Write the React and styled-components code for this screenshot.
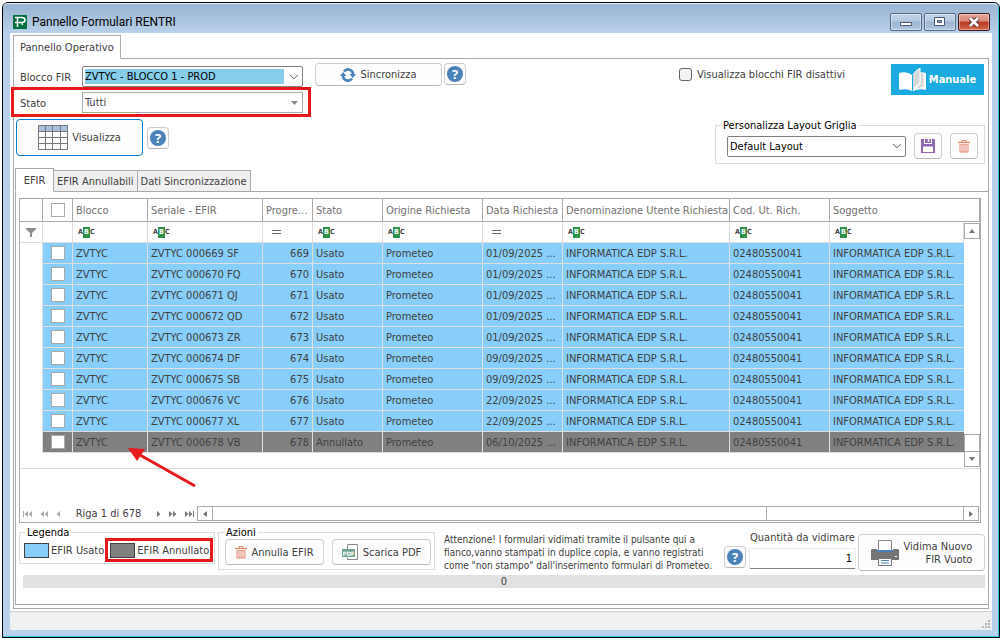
import { styled, createGlobalStyle, css } from "styled-components";

const columns = [
  { label: "", width: 23 },
  { label: "check", width: 30 },
  { label: "Blocco", width: 75, filter: "abc" },
  { label: "Seriale - EFIR", width: 115, filter: "abc" },
  { label: "Progre...", width: 50, filter: "eq" },
  { label: "Stato", width: 70, filter: "abc" },
  { label: "Origine Richiesta", width: 100, filter: "abc" },
  { label: "Data Richiesta", width: 80, filter: "eq" },
  { label: "Denominazione Utente Richiesta", width: 167, filter: "abc" },
  { label: "Cod. Ut. Rich.", width: 100, filter: "abc" },
  { label: "Soggetto", filter: "abc" },
];

const rows = [
  ["669 SF", "01/09/2025"],
  ["670 FQ", "01/09/2025"],
  ["671 QJ", "01/09/2025"],
  ["672 QD", "01/09/2025"],
  ["673 ZR", "01/09/2025"],
  ["674 DF", "09/09/2025"],
  ["675 SB", "09/09/2025"],
  ["676 VC", "22/09/2025"],
  ["677 XL", "22/09/2025"],
  ["678 VB", "06/10/2025", true],
];

function TrashIcon() {
  return (
    <svg width="12" height="13" viewBox="0 0 12 13">
      <path d="M4 2V.5h4V2" fill="none" stroke="#e58a72" />
      <path d="M0 2.5h12" stroke="#e58a72" strokeWidth="1.4" />
      <path d="M1 4.5h10V11l-1 2H2l-1-2z" fill="#f2c3b8" />
      <path d="M1.5 4.5h9" stroke="#e9a797" />
      <path d="M1.5 11.5h9" stroke="#e9a797" />
    </svg>
  );
}

function Help() {
  return (
    <HelpButton type="button" aria-label="Aiuto">
      <span>?</span>
    </HelpButton>
  );
}

function Arrow({ dir = "up", size = 6 }) {
  const turn = { up: 0, right: 90, down: 180, left: 270 }[dir];
  return (
    <svg width={size} height={size} viewBox="0 0 6 6">
      <path d="M0 5L3 1l3 4z" fill="#777" transform={`rotate(${turn} 3 3)`} />
    </svg>
  );
}

function Chevron() {
  return (
    <svg width="10" height="6" viewBox="0 0 10 6">
      <path d="M1 .8l4 4 4-4" fill="none" stroke="#555" />
    </svg>
  );
}

function NavIcon({ count = 1, bar, back, dim }) {
  const width = count * 4 + (bar ? 1 : 0);
  return (
    <svg width={width} height="6" viewBox={`0 0 ${width} 6`}>
      <g
        fill={dim ? "#a9a9a9" : "#777"}
        transform={back ? `translate(${width} 0) scale(-1 1)` : undefined}
      >
        {[...Array(count)].map((_, i) => (
          <path key={i} d={`M${i * 4} 0l3.5 3-3.5 3z`} />
        ))}
        {bar && <path d={`M${width - 1} 0h1v6h-1z`} />}
      </g>
    </svg>
  );
}

function TitleBar() {
  return (
    <StyledTitleBar>
      <svg width="14" height="14" viewBox="0 0 14 14">
        <path d="M0 0h14v14H0z" fill="#04703f" />
        <path
          d="M2 2.5h6.500q3.500 0 3.500 2.500t-3.500 2.500H2M4.500 3v9M9 7.500l.5 2.500"
          fill="none"
          stroke="#fff"
          strokeWidth="1.5"
        />
      </svg>
      <h1>Pannello Formulari RENTRI</h1>
      <div className="controls">
        <WindowButton type="button" aria-label="Riduci">
          <svg width="12" height="10" viewBox="0 0 12 10">
            <path d="M.5 5.500h11v3H.5z" fill="#fff" stroke="#4d5666" />
          </svg>
        </WindowButton>
        <WindowButton type="button" aria-label="Ingrandisci">
          <svg width="12" height="10" viewBox="0 0 12 10">
            <path d="M.5.5h10v8H.5z" fill="#fff" stroke="#4d5666" />
            <path d="M3.500 3.500h4v2h-4z" fill="#a5bedb" stroke="#4d5666" />
          </svg>
        </WindowButton>
        <WindowButton type="button" aria-label="Chiudi" $close>
          <svg width="12" height="10" viewBox="0 0 12 10">
            <path d="M2 1l8 8M10 1L2 9" stroke="#5a2a30" strokeWidth="4.500" />
            <path d="M2 1l8 8M10 1L2 9" stroke="#fff" strokeWidth="2.600" />
          </svg>
        </WindowButton>
      </div>
    </StyledTitleBar>
  );
}

function Toolbar() {
  return (
    <StyledToolbar>
      <div className="filters">
        <Field>
          <label htmlFor="blocco">Blocco FIR</label>
          <Select $selected>
            <select id="blocco">
              <option>ZVTYC - BLOCCO 1 - PROD</option>
            </select>
            <Chevron />
          </Select>
        </Field>
        <Field $marked>
          <label htmlFor="stato">Stato</label>
          <Select $square>
            <select id="stato">
              <option>Tutti</option>
            </select>
            <svg width="10" height="6" viewBox="0 0 10 6">
              <path d="M2 1h7L5.500 5z" fill="#888" />
            </svg>
          </Select>
        </Field>
        <div className="show">
          <Button type="button" $primary>
            <svg width="30" height="26" viewBox="0 0 30 26">
              <path d="M.5.5h29v6H.5z" fill="#a9c1e0" />
              <path
                d="M.5.5h29v24H.5zM.5 6.500h29M.5 12.500h29M.5 18.500h29M7.500.5v24M14.500.5v24M22.500.5v24"
                fill="none"
                stroke="#777"
              />
            </svg>
            Visualizza
          </Button>
          <Help />
        </div>
      </div>
      <div className="sync">
        <Button type="button" $wide>
          <svg width="16" height="14" viewBox="0 0 16 14">
            <g fill="none" stroke="#4a82b9" strokeWidth="2.600">
              <path d="M4 3.500A5 5 0 0 1 13 7" />
              <path d="M12 10.500A5 5 0 0 1 3 7" />
            </g>
            <path d="M9.500 6H16l-3.200 4zM0 8h6.500L3.200 4z" fill="#4a82b9" />
          </svg>
          Sincronizza
        </Button>
        <Help />
      </div>
      <div className="options">
        <div className="top">
          <Check>
            <input type="checkbox" />
            Visualizza blocchi FIR disattivi
          </Check>
          <ManualButton type="button">
            <svg width="27" height="24" viewBox="0 0 27 24">
              <path d="M0 5q8-2 13 2v16q-5-3-13-1z" fill="#fff" />
              <path d="M14 7q6-4 13-2v17q-7-2-13 1z" fill="#fff" />
              <path d="M14 7q3-5 7-7v15q-5 3-7 8z" fill="#d5d8da" />
              <path d="M21.500 5h3v14q-5 0-8 2 2-3 5-5z" fill="#d5d8da" />
              <path
                d="M14 7q3-5 7-7v15q-5 3-7 8"
                fill="none"
                stroke="#fff"
              />
            </svg>
            Manuale
          </ManualButton>
        </div>
        <Group className="layout">
          <legend>Personalizza Layout Griglia</legend>
          <Select>
            <select aria-label="Layout griglia">
              <option>Default Layout</option>
            </select>
            <Chevron />
          </Select>
          <Button type="button" aria-label="Salva layout" $icon>
            <svg width="14" height="14" viewBox="0 0 14 14">
              <path d="M0 0h14v14H0z" fill="#8f68b0" />
              <path d="M3 0h8v5H3z" fill="#fff" />
              <path d="M4 0h6v4H4z" fill="#8f68b0" />
              <path d="M7.500 0v3" stroke="#fff" strokeWidth="1.5" />
              <path d="M2 7.500h10V13H2z" fill="#fff" />
            </svg>
          </Button>
          <Button type="button" aria-label="Elimina layout" $icon>
            <TrashIcon />
          </Button>
        </Group>
      </div>
    </StyledToolbar>
  );
}

function FilterMark({ type }) {
  if (type === "eq") return <Equals />;
  if (type === "abc")
    return (
      <Abc>
        A<b>B</b>C
      </Abc>
    );
  return null;
}

function Grid() {
  return (
    <StyledGrid>
      <Table>
        <colgroup>
          {columns.map((c) => (
            <col key={c.label} style={{ width: c.width }} />
          ))}
          <col style={{ width: 16 }} />
        </colgroup>
        <thead>
          <tr>
            {columns.map((c) => (
              <th key={c.label} colSpan={c.label === "Soggetto" ? 2 : 1}>
                {c.label === "check" ? (
                  <input type="checkbox" aria-label="Seleziona tutti" />
                ) : (
                  c.label
                )}
              </th>
            ))}
          </tr>
        </thead>
        <tbody>
          <FilterRow>
            {columns.map((c, i) => (
              <td key={c.label}>
                {i === 0 ? (
                  <svg width="10" height="9" viewBox="0 0 10 9">
                    <path d="M0 0h10v1L6 5v4H4V5L0 1z" fill="#8a8a8a" />
                  </svg>
                ) : (
                  <FilterMark type={c.filter} />
                )}
              </td>
            ))}
            <ScrollCell rowSpan={rows.length + 2}>
              <VerticalScroll>
                <button type="button" aria-label="Su">
                  <Arrow />
                </button>
                <div className="thumb" />
                <button type="button" aria-label="Giù">
                  <Arrow dir="down" />
                </button>
              </VerticalScroll>
            </ScrollCell>
          </FilterRow>
          {rows.map(([serial, date, cancelled]) => (
            <DataRow key={serial} $cancelled={cancelled}>
              <td />
              <td>
                <input type="checkbox" aria-label={`Seleziona ${serial}`} />
              </td>
              <td>ZVTYC</td>
              <td>ZVTYC 000{serial}</td>
              <td className="number">{serial.slice(0, 3)}</td>
              <td>{cancelled ? "Annullato" : "Usato"}</td>
              <td>Prometeo</td>
              <td>{date} ...</td>
              <td>INFORMATICA EDP S.R.L.</td>
              <td>02480550041</td>
              <td>INFORMATICA EDP S.R.L.</td>
            </DataRow>
          ))}
          <tr className="filler">
            <td colSpan={columns.length} />
          </tr>
        </tbody>
      </Table>
      <Navigator>
        <div className="pages">
          <button type="button" aria-label="Prima">
            <NavIcon count={2} bar back dim />
          </button>
          <button type="button" aria-label="Pagina precedente">
            <NavIcon count={2} back dim />
          </button>
          <button type="button" aria-label="Precedente">
            <NavIcon back dim />
          </button>
          <span>Riga 1 di 678</span>
          <button type="button" aria-label="Successiva">
            <NavIcon />
          </button>
          <button type="button" aria-label="Pagina successiva">
            <NavIcon count={2} />
          </button>
          <button type="button" aria-label="Ultima">
            <NavIcon count={2} bar />
          </button>
        </div>
        <HorizontalScroll>
          <button type="button" aria-label="Sinistra">
            <Arrow dir="left" />
          </button>
          <div className="track">
            <div className="thumb" />
          </div>
          <button type="button" aria-label="Destra">
            <Arrow dir="right" />
          </button>
        </HorizontalScroll>
      </Navigator>
      <Pointer width="72" height="44" viewBox="0 0 72 44">
        <path d="M12 8l55 31" stroke="#e8191c" strokeWidth="3" />
        <path d="M0 1l17 1-8 12z" fill="#e8191c" />
      </Pointer>
    </StyledGrid>
  );
}

function Actions() {
  return (
    <StyledActions>
      <Group className="legend">
        <legend>Legenda</legend>
        <LegendItem>
          <Swatch $color="#87cefa" />
          EFIR Usato
        </LegendItem>
        <LegendItem $marked>
          <Swatch $color="#808080" />
          EFIR Annullato
        </LegendItem>
      </Group>
      <Group className="buttons">
        <legend>Azioni</legend>
        <Button type="button">
          <TrashIcon />
          Annulla EFIR
        </Button>
        <Button type="button">
          <svg width="17" height="17" viewBox="0 0 17 17">
            <path d="M5.500 6V.5h10v15h-10v-2" fill="#fff" stroke="#888" />
            <path d="M0 5h13v8H0z" fill="#6fa48c" />
            <text
              x="6.500"
              y="11.500"
              fontSize="6"
              fontWeight="bold"
              textAnchor="middle"
              fill="#fff"
            >
              PDF
            </text>
          </svg>
          Scarica PDF
        </Button>
      </Group>
      <p>
        Attenzione! I formulari vidimati tramite il pulsante qui a
        <br />
        fianco,vanno stampati in duplice copia, e vanno registrati
        <br />
        come "non stampo" dall'inserimento formulari di Prometeo.
      </p>
      <Help />
      <Quantity>
        <label htmlFor="quantita">Quantità da vidimare</label>
        <input id="quantita" type="text" defaultValue="1" />
      </Quantity>
      <Button type="button" className="print">
        <svg width="28" height="26" viewBox="0 0 28 26">
          <path d="M0 10h6v2h16v-2h6v10H0z" fill="#757575" />
          <path d="M0 10l1-1h5v3H0zM22 9h5l1 1v2h-6z" fill="#757575" />
          <path d="M7.500.5h13v11h-13z" fill="#fff" stroke="#888" />
          <path d="M6 11h16" stroke="#4a82b9" strokeWidth="2" />
          <path d="M7.500 18.500h13v7h-13z" fill="#fff" stroke="#757575" />
          <path d="M10 20.500h8M10 23h8" stroke="#4a82b9" />
          <path d="M24 16.500h2" stroke="#fff" />
        </svg>
        <span>
          Vidima Nuovo
          <br />
          FIR Vuoto
        </span>
      </Button>
    </StyledActions>
  );
}

function App() {
  return (
    <>
      <GlobalStyle />
      <Window>
        <TitleBar />
        <Body>
          <Tabs>
            <Tab type="button" $active>
              Pannello Operativo
            </Tab>
          </Tabs>
          <Page>
            <Toolbar />
            <Tabs $inner>
              <Tab type="button" $active>
                EFIR
              </Tab>
              <Tab type="button">EFIR Annullabili</Tab>
              <Tab type="button">Dati Sincronizzazione</Tab>
            </Tabs>
            <InnerPage>
              <Grid />
              <Actions />
              <Progress role="progressbar" aria-valuenow={0}>
                0
              </Progress>
            </InnerPage>
          </Page>
        </Body>
        <StatusBar>
          <svg width="8" height="8" viewBox="0 0 8 8">
            <path
              d="M6 0h2v2H6zM3 3h2v2H3zM6 3h2v2H6zM0 6h2v2H0zM3 6h2v2H3zM6 6h2v2H6z"
              fill="#b5b5b5"
            />
          </svg>
        </StatusBar>
      </Window>
    </>
  );
}

export default App;

const GlobalStyle = createGlobalStyle`
  * {
    box-sizing: border-box;
  }

  body {
    margin: 0;
    background: #fff;
    color: #404040;
    font: 11px/13px "DejaVu Sans Condensed", "Noto Sans", sans-serif;
  }

  button,
  input,
  select {
    margin: 0;
    padding: 0;
    font: inherit;
    color: inherit;
  }

  svg {
    display: block;
    flex: none;
  }
`;

const marked = css`
  position: relative;

  &::after {
    content: "";
    position: absolute;
    inset: -5px -8px -4px -5px;
    border: 3px solid #e8191c;
    pointer-events: none;
  }
`;

const Window = styled.div`
  display: flex;
  flex-direction: column;
  min-height: calc(100vh - 3px);
  margin: 2px 2px 1px;
  padding: 0 7px 7px;
  border: 1px solid #000;
  border-radius: 6px 6px 0 0;
  background: #b9d1ea;
  box-shadow: inset -1px -1px #35c5e0;
`;

const StyledTitleBar = styled.header`
  display: flex;
  align-items: center;
  gap: 5px;
  height: 30px;
  margin: 0 -6px 0 -7px;
  padding: 6px 8px 0 10px;
  border-top: 1px solid #e8f0f8;
  border-radius: 5px 5px 0 0;
  background: linear-gradient(#99b4d1, #b9d1ea);

  h1 {
    flex: 1;
    margin: 0;
    color: #000;
    font: 12px/16px Roboto, "Noto Sans", sans-serif;
  }

  .controls {
    display: flex;
    gap: 2px;
  }
`;

const WindowButton = styled.button`
  display: flex;
  justify-content: center;
  align-items: center;
  width: 32px;
  height: 18px;
  border: 1px solid ${(p) => (p.$close ? "#431422" : "#566b85")};
  border-radius: 2px;
  background: ${(p) =>
    p.$close
      ? "linear-gradient(#e5a696, #d98a78 45%, #b8371f 50%, #cf6a4c)"
      : "linear-gradient(#c3d4e8, #b2c8e0 45%, #9bb5d2 50%, #b0c8e2)"};
  box-shadow: inset 0 0 0 1px rgba(255, 255, 255, 0.4);
`;

const Body = styled.main`
  flex: 1;
  display: flex;
  flex-direction: column;
  padding: 2px 3px;
  background: #fff;
`;

const Tabs = styled.nav`
  display: flex;
  align-items: flex-end;
  margin-bottom: -1px;
  margin-left: ${(p) => (p.$inner ? 1 : 0)}px;
`;

const Tab = styled.button`
  position: relative;
  height: 22px;
  padding: 0 3px;
  border: 1px solid #a9a9a9;
  background: #f0f0f0;

  & + & {
    border-left-width: 0;
  }

  ${(p) =>
    p.$active &&
    css`
      min-width: 39px;
      height: 24px;
      padding: 0 6px;
      border-bottom-color: #fff;
      background: #fff;
    `}
`;

const Page = styled.section`
  flex: 1;
  display: flex;
  flex-direction: column;
  padding-bottom: 3px;
  border: 1px solid #a9a9a9;
`;

const InnerPage = styled.section`
  flex: 1;
  margin-left: 1px;
  padding: 6px 3px 16px;
  border: 1px solid #a9a9a9;
  border-right: 0;
`;

const StyledToolbar = styled.div`
  display: flex;
  height: 109px;
  padding: 4px 3px 0 2px;

  .filters {
    display: flex;
    flex-direction: column;
    gap: 5px;
    width: 287px;
    padding-top: 3px;
  }

  .show {
    display: flex;
    align-items: center;
    gap: 4px;
    padding-top: 1px;
  }

  .show > button:first-child {
    width: 127px;
    height: 37px;
  }

  .sync {
    display: flex;
    align-items: flex-start;
    gap: 2px;
    margin-left: 12px;
  }

  .options {
    display: flex;
    flex-direction: column;
    align-items: flex-end;
    gap: 24px;
    flex: 1;
  }

  .top {
    display: flex;
    align-items: flex-start;
    gap: 46px;
    padding: 1px 1px 0 0;
  }

  .layout {
    display: flex;
    align-items: center;
    gap: 8px;
    width: 270px;
    padding: 1px 6px 4px 11px;
  }

  .layout > div {
    flex: 1;
  }
`;

const Field = styled.div`
  display: grid;
  grid-template-columns: 66px 1fr;
  align-items: center;

  label {
    padding: 2px 0 0 4px;
  }

  ${(p) => p.$marked && marked}
`;

const Select = styled.div`
  display: grid;
  align-items: center;

  > * {
    grid-area: 1 / 1;
  }

  select {
    appearance: none;
    width: 100%;
    height: 21px;
    padding: 2px 18px 2px 2px;
    border: 1px solid #808080;
    border-radius: 2px;
    background: #fff;
    color: #000;

    ${(p) =>
      p.$selected &&
      css`
        background: #87ceeb content-box;
      `}

    ${(p) =>
      p.$square &&
      css`
        border-color: #a9a9a9;
        border-radius: 0;
        color: #404040;
      `}
  }

  svg {
    justify-self: end;
    margin-right: 4px;
    pointer-events: none;
  }
`;

const Button = styled.button`
  display: flex;
  justify-content: center;
  align-items: center;
  gap: 4px;
  height: 26px;
  border: 1px solid #cfcfcf;
  border-bottom-color: #b8b8b8;
  border-radius: 4px;
  background: #fdfdfd;

  ${(p) => p.$primary && "border-color: #0078d4;"}
  ${(p) => p.$wide && "width: 127px; height: 23px;"}
  ${(p) => p.$icon && "width: 28px;"}
`;

const HelpButton = styled(Button)`
  flex: none;
  width: 22px;
  height: 22px;

  span {
    width: 16px;
    height: 16px;
    border-radius: 50%;
    background: #4a82b9;
    color: #fff;
    font: bold 13px/16px "Noto Sans", sans-serif;
  }
`;

const Check = styled.label`
  display: flex;
  align-items: center;
  gap: 5px;
  padding-top: 4px;

  input {
    appearance: none;
    width: 13px;
    height: 13px;
    border: 1px solid #666;
    border-radius: 3px;
    background: #f3f3f3;
  }
`;

const ManualButton = styled.button`
  display: flex;
  justify-content: center;
  align-items: center;
  gap: 3px;
  width: 93px;
  height: 31px;
  border: 0;
  background: #1babe0;
  color: #fff;
  font-weight: bold;
`;

const Group = styled.fieldset`
  min-width: 0;
  margin: 0;
  padding: 0;
  border: 1px solid #dcdcdc;

  legend {
    margin-left: -6px;
    padding: 0 2px;
    color: #000;
  }
`;

const StyledGrid = styled.div`
  position: relative;
  margin-right: 4px;
  border: 1px solid #a9a9a9;
`;

const Table = styled.table`
  width: 100%;
  table-layout: fixed;
  border-collapse: separate;
  border-spacing: 0;

  th,
  td {
    height: 21px;
    padding: 0 0 0 3px;
    border: solid #dedede;
    border-width: 0 1px 1px 0;
    text-align: left;
    white-space: nowrap;
    overflow: hidden;
  }

  th {
    height: 23px;
    border-color: #a9a9a9;
    color: #707070;
    font-weight: normal;
  }

  th:nth-child(2),
  td:nth-child(2) {
    padding: 0 0 0 8px;
  }

  input {
    display: block;
    appearance: none;
    width: 14px;
    height: 14px;
    border: 1px solid #a9a9a9;
    background: #fff;
  }

  .filler td {
    height: 16px;
    border-right: 0;
  }
`;

const FilterRow = styled.tr`
  td:first-child {
    padding-left: 6px;
  }
`;

const DataRow = styled.tr`
  td:not(:first-child) {
    background: ${(p) => (p.$cancelled ? "#808080" : "#87cefa")};
  }

  && td:first-child {
    border-bottom: 0;
  }

  && td:last-child {
    border-right: 0;
  }

  && .number {
    padding-right: 3px;
    text-align: right;
  }
`;

const Abc = styled.span`
  display: flex;
  align-items: center;
  height: 11px;
  padding-left: 2px;
  font: bold 7px/11px "DejaVu Sans Condensed", sans-serif;

  b {
    width: 7px;
    background: #2e9147;
    color: #fff;
    text-align: center;
  }
`;

const Equals = styled.span`
  display: block;
  width: 9px;
  height: 4px;
  margin-left: 6px;
  border: solid #666;
  border-width: 1px 0;
`;

const ScrollCell = styled.td`
  && {
    padding: 1px 0;
    border-right: 0;
    vertical-align: top;
  }
`;

const VerticalScroll = styled.div`
  display: flex;
  flex-direction: column;
  height: 244px;

  button,
  .thumb {
    display: flex;
    justify-content: center;
    align-items: center;
    height: 16px;
    border: 1px solid #a9a9a9;
    background: #fff;
  }

  .thumb {
    height: 18px;
    margin-top: auto;
    margin-bottom: -1px;
  }
`;

const Navigator = styled.div`
  display: flex;
  padding: 37px 1px 1px 0;

  .pages {
    display: flex;
    align-items: center;
    justify-content: space-between;
    width: 177px;
    padding: 0 3px;
  }

  .pages button {
    border: 0;
    background: none;
  }

  span {
    margin: 0 8px;
  }
`;

const HorizontalScroll = styled.div`
  display: flex;
  flex: 1;
  height: 15px;

  button,
  .thumb {
    display: flex;
    justify-content: center;
    align-items: center;
    width: 16px;
    border: 1px solid #a9a9a9;
    background: #fff;
  }

  .track {
    display: flex;
    flex: 1;
    border: solid #a9a9a9;
    border-width: 1px 0;
  }

  .thumb {
    width: 74%;
    margin: -1px 0 -1px -1px;
  }
`;

const Pointer = styled.svg`
  position: absolute;
  top: 248px;
  left: 108px;
  pointer-events: none;
`;

const StyledActions = styled.div`
  display: flex;
  align-items: flex-start;
  padding-top: 3px;

  > * {
    flex: none;
  }

  .legend,
  .buttons {
    display: flex;
    gap: 6px;
    width: 196px;
    padding: 4px 4px 5px;
  }

  .legend legend {
    margin-left: 1px;
  }

  .buttons {
    gap: 8px;
    width: 217px;
    margin-left: 3px;
    padding: 0 3px 4px 6px;
  }

  .buttons legend {
    margin-left: -1px;
  }

  .buttons button {
    flex: 1;
  }

  p {
    flex: 1;
    min-width: 0;
    margin: 7px 0 0 9px;
    font-size: 10px;
    white-space: nowrap;
  }

  p + button {
    margin: 20px 3px 0 0;
  }

  .print {
    gap: 5px;
    width: 127px;
    height: 37px;
    margin: 8px 0 0 2px;
    text-align: right;
  }
`;

const LegendItem = styled.span`
  display: flex;
  align-items: center;
  gap: 2px;
  white-space: nowrap;

  ${(p) => p.$marked && marked}

  &::after {
    right: -4px;
  }
`;

const Swatch = styled.i`
  width: 25px;
  height: 15px;
  border: 1px solid #404040;
  background: ${(p) => p.$color};
`;

const Quantity = styled.div`
  display: flex;
  flex-direction: column;
  gap: 4px;
  width: 107px;
  padding-top: 5px;

  label {
    text-align: center;
    white-space: nowrap;
  }

  input {
    width: 100%;
    height: 21px;
    padding: 0 3px;
    border: 1px solid #ececec;
    border-bottom-color: #808080;
    border-radius: 2px;
    color: #000;
    text-align: right;
  }
`;

const Progress = styled.div`
  height: 13px;
  margin: 3px 0 0 4px;
  background: #e1e1e1;
  text-align: center;
`;

const StatusBar = styled.footer`
  display: flex;
  justify-content: flex-end;
  align-items: flex-end;
  height: 19px;
  padding: 2px;
  border-top: 1px solid #d0d0d0;
  background: #f0f0f0;
`;
